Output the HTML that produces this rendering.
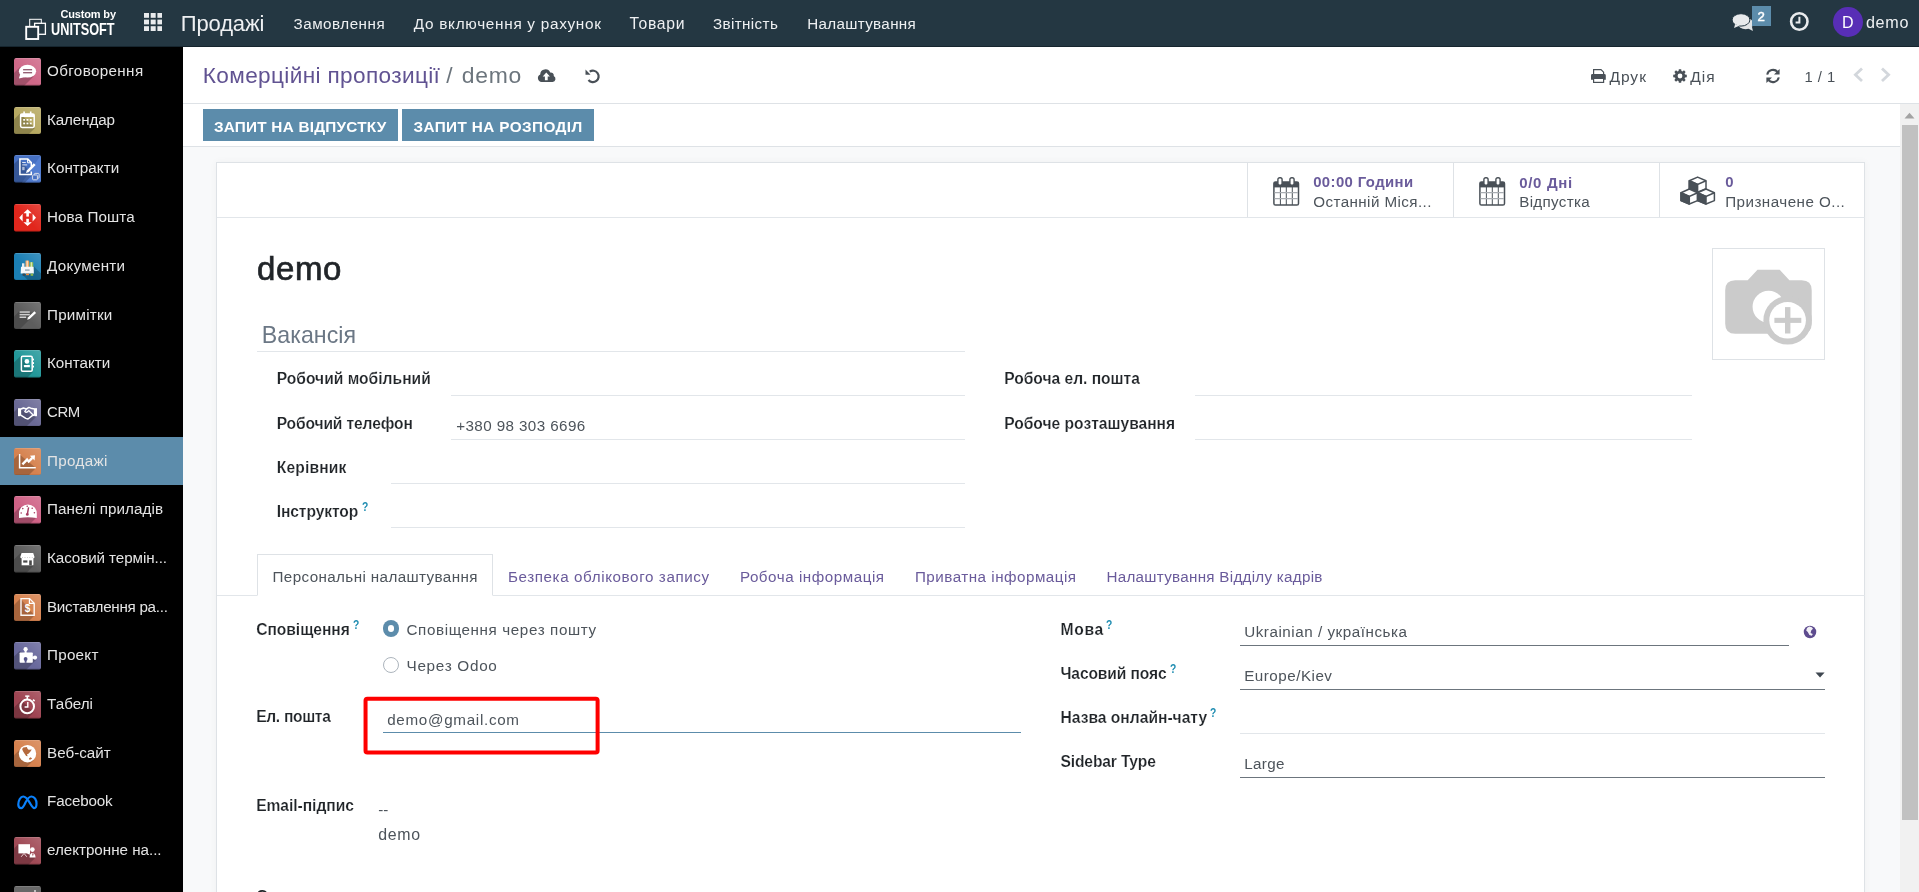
<!DOCTYPE html>
<html lang="uk">
<head>
<meta charset="utf-8">
<title>Odoo - demo</title>
<style>
*{box-sizing:border-box;margin:0;padding:0}
html,body{width:1919px;height:892px;overflow:hidden;background:#f8f9fa;font-family:"Liberation Sans",sans-serif;color:#212529}
.t{position:absolute;white-space:pre;line-height:1}
.a{position:absolute}
#nav{position:absolute;left:0;top:0;width:1919px;height:46.8px;background:#243742;border-bottom:1px solid #16252e}
#side{position:absolute;left:0;top:46.5px;width:183px;height:846px;background:#000}
.act{position:absolute;left:0;width:183px;height:48px;background:#5c8cab}
.ic{position:absolute;left:14px;width:27px;height:27px;border-radius:2px;overflow:hidden}
#cp{position:absolute;left:183px;top:46.8px;width:1736px;height:57.2px;background:#fff;border-bottom:1px solid #dee2e6}
#sb{position:absolute;left:183px;top:104px;width:1717px;height:43px;background:#fff;border-bottom:1px solid #dee2e6}
.btn{position:absolute;top:109px;height:32px;background:#5c8cab}
#sheet{position:absolute;left:216px;top:162px;width:1649px;height:760px;background:#fff;border:1px solid #dee2e6;box-shadow:0 0 8px rgba(0,0,0,.04)}
.hl{position:absolute;height:1px;background:#e2e6ea}
.vl{position:absolute;width:1px;background:#dee2e6}
#scroll{position:absolute;left:1899.5px;top:104px;width:19.5px;height:788px;background:#f1f1f1}
#thumb{position:absolute;left:1901.5px;top:125px;width:16px;height:695px;background:#c1c1c1}
</style>
</head>
<body>
<div id="nav"></div>
<div id="side"><div class="act" style="top:390.5px"></div></div>
<div id="cp"></div>
<div id="sb"></div>
<div class="btn" style="left:203px;width:195px"></div>
<div class="btn" style="left:402px;width:192px"></div>
<div id="sheet"></div>
<!-- stat button box -->
<div class="hl" style="left:217px;top:217px;width:1648px"></div>
<div class="vl" style="left:1247px;top:163px;height:54px"></div>
<div class="vl" style="left:1453px;top:163px;height:54px"></div>
<div class="vl" style="left:1659px;top:163px;height:54px"></div>
<!-- photo -->
<div class="a" style="left:1712px;top:248px;width:113px;height:112px;border:1px solid #dee2e6;background:#fff"></div>
<!-- field lines -->
<div class="hl" style="left:257px;top:351px;width:708px"></div>
<div class="hl" style="left:451px;top:395px;width:514px"></div>
<div class="hl" style="left:451px;top:439px;width:514px"></div>
<div class="hl" style="left:391px;top:483px;width:574px"></div>
<div class="hl" style="left:391px;top:527px;width:574px"></div>
<div class="hl" style="left:1195px;top:395px;width:497px"></div>
<div class="hl" style="left:1195px;top:439px;width:497px"></div>
<!-- tabs -->
<div class="hl" style="left:217px;top:595px;width:1648px"></div>
<div class="a" style="left:257px;top:554px;width:236px;height:42px;border:1px solid #dee2e6;border-bottom:1px solid #fff;background:#fff"></div>
<!-- radios -->
<div class="a" style="left:382.7px;top:620.4px;width:16.4px;height:16.4px;border-radius:50%;background:#5c8cab"></div>
<div class="a" style="left:387.7px;top:625.4px;width:6.4px;height:6.4px;border-radius:50%;background:#fff"></div>
<div class="a" style="left:382.7px;top:656.5px;width:16.4px;height:16.4px;border-radius:50%;background:#fff;border:1px solid #adb5bd"></div>
<!-- email line + red box -->
<div class="hl" style="left:383px;top:732px;width:638px;background:#5c8cab"></div>
<svg class="a" style="left:360px;top:692px" width="244" height="66" viewBox="0 0 244 66"><rect x="5.55" y="6.65" width="232.05" height="53.95" rx="1.8" fill="none" stroke="#fe0000" stroke-width="4"/></svg>
<!-- right field lines -->
<div class="hl" style="left:1240px;top:645px;width:549px;background:#6c757d"></div>
<div class="hl" style="left:1240px;top:689px;width:585px;background:#6c757d"></div>
<div class="hl" style="left:1240px;top:733px;width:585px"></div>
<div class="hl" style="left:1240px;top:777px;width:585px;background:#6c757d"></div>
<!-- scrollbar -->
<div id="scroll"></div><div id="thumb"></div>
<svg class="a" style="left:0;top:0" width="1" height="1"><defs><linearGradient id="lg" x1="1" y1="0" x2="0" y2="1"><stop offset="0" stop-color="#fff" stop-opacity=".16"/><stop offset=".55" stop-color="#fff" stop-opacity="0"/></linearGradient></defs></svg>
<svg class="a" style="left:14px;top:58.0px;border-radius:2px;overflow:hidden;" width="27" height="27.5" viewBox="0 0 27 27.5"><rect width="27" height="27.5" rx="1.5" fill="#cf6888"/><polygon points="6,9 19.5,18.5 -10.5,48.5 -24,39" fill="#000" opacity="0.22"/><rect width="27" height="27.5" fill="url(#lg)"/><rect y="0" width="27" height="1" fill="#fff" opacity=".15"/><rect y="26.5" width="27" height="1" fill="#000" opacity=".15"/><ellipse cx="13.5" cy="13.2" rx="8.6" ry="6.4" fill="#fff"/><polygon points="6.2,16 4.9,20.6 11.5,19" fill="#fff"/><rect x="9.1" y="11.2" width="9" height="1.1" fill="#7b3850"/><rect x="9.1" y="14.2" width="9" height="1.1" fill="#7b3850"/></svg>
<svg class="a" style="left:14px;top:106.7px;border-radius:2px;overflow:hidden;" width="27" height="27.5" viewBox="0 0 27 27.5"><rect width="27" height="27.5" rx="1.5" fill="#b7a962"/><polygon points="6,6.5 21,21 -9,51 -24,36.5" fill="#000" opacity="0.22"/><rect width="27" height="27.5" fill="url(#lg)"/><rect y="0" width="27" height="1" fill="#fff" opacity=".15"/><rect y="26.5" width="27" height="1" fill="#000" opacity=".15"/><rect x="6.6" y="7" width="13.6" height="13.4" rx="1.4" fill="none" stroke="#fff" stroke-width="1.5"/><rect x="6.6" y="7" width="13.6" height="3" fill="#fff"/><rect x="9.3" y="4.5" width="1.6" height="3.5" fill="#fff"/><rect x="15.9" y="4.5" width="1.6" height="3.5" fill="#fff"/><rect x="9.2" y="12" width="1.9" height="1.7" fill="#fff"/><rect x="12.5" y="12" width="1.9" height="1.7" fill="#fff"/><rect x="15.8" y="12" width="1.9" height="1.7" fill="#fff"/><rect x="9.2" y="15.6" width="1.9" height="1.7" fill="#fff"/><rect x="12.5" y="15.6" width="1.9" height="1.7" fill="#fff"/><rect x="15.8" y="15.6" width="1.9" height="1.7" fill="#fff"/></svg>
<svg class="a" style="left:14px;top:155.4px;border-radius:2px;overflow:hidden;" width="27" height="27.5" viewBox="0 0 27 27.5"><rect width="27" height="27.5" rx="1.5" fill="#4670c2"/><polygon points="27,0 27,27.5 8,27.5" fill="#5f8ade" opacity=".55"/><polygon points="5,4 18.5,20 -11.5,50 -25,34" fill="#000" opacity="0.22"/><rect y="0" width="27" height="1" fill="#fff" opacity=".15"/><rect y="26.5" width="27" height="1" fill="#000" opacity=".15"/><path d="M17.3,11.4 V7.6 L13.8,4.1 H5.9 V19.4 H17.3 V16.6" fill="none" stroke="#fff" stroke-width="1.5"/><path d="M13.6,4.2 v3.6 h3.6" fill="none" stroke="#fff" stroke-width="1"/><rect x="8.2" y="7" width="3.6" height="1" fill="#dfe6f5"/><rect x="8.2" y="9.4" width="5" height="1" fill="#dfe6f5"/><rect x="8.2" y="11.8" width="2.4" height="3.4" fill="#dfe6f5" opacity=".7"/><path d="M19.8,8.2 l1.8,1.8 l-7,7.2 l-2.6,0.9 l0.8,-2.7 z" fill="#fff"/><rect x="20.3" y="18.4" width="4.8" height="4.8" rx=".8" fill="none" stroke="#d5dbe8" stroke-width="1"/><rect x="18.6" y="20" width="4.8" height="4.8" rx=".8" fill="#4670c2" stroke="#d5dbe8" stroke-width="1"/></svg>
<svg class="a" style="left:14px;top:204.1px;border-radius:2px;overflow:hidden;" width="27" height="27.5" viewBox="0 0 27 27.5"><rect width="27" height="27.5" rx="1.5" fill="#e1261c"/><rect width="27" height="27.5" fill="url(#lg)"/><rect y="0" width="27" height="1" fill="#fff" opacity=".15"/><rect y="26.5" width="27" height="1" fill="#000" opacity=".15"/><polygon points="13.6,5.3 17.8,9.2 9.4,9.2" fill="#fff"/><rect x="12.3" y="9" width="2.6" height="3.6" fill="#fff"/><polygon points="13.6,22.1 17.8,18.2 9.4,18.2" fill="#fff"/><rect x="12.3" y="14.8" width="2.6" height="3.6" fill="#fff"/><polygon points="5.2,13.7 8.6,9.8 8.6,17.6" fill="#fff"/><polygon points="22,13.7 18.6,9.8 18.6,17.6" fill="#fff"/></svg>
<svg class="a" style="left:14px;top:252.8px;border-radius:2px;overflow:hidden;" width="27" height="27.5" viewBox="0 0 27 27.5"><rect width="27" height="27.5" rx="1.5" fill="#1b7fb4"/><rect width="27" height="27.5" fill="url(#lg)"/><rect y="0" width="27" height="1" fill="#fff" opacity=".15"/><rect y="26.5" width="27" height="1" fill="#000" opacity=".15"/><polygon points="19.5,13 27,20.5 27,27.5 14,27.5 8,21" fill="#000" opacity=".22"/><rect x="8" y="10.3" width="2.4" height="5" fill="#e9eef2"/><rect x="11.5" y="7.6" width="3.6" height="7" fill="#f0a35e"/><rect x="12.6" y="7.6" width="1.2" height="7" fill="#fbe3cf"/><rect x="15.6" y="9.2" width="3.6" height="6" fill="#9cc25a"/><rect x="16.9" y="9.2" width="1" height="6" fill="#dcebc0"/><path d="M7,13.8 h12.6 l0.3,6.6 h-13.2 z" fill="#f4f7fa"/><rect x="11" y="16.6" width="4.6" height=".9" fill="#5f7a8c"/><rect x="8.6" y="20.6" width="2.3" height="2.2" fill="#3a4650"/><rect x="12" y="20.6" width="3" height="1.6" fill="#f08a3c"/><rect x="16.6" y="20.6" width="2.6" height="2.2" fill="#8fb84a"/></svg>
<svg class="a" style="left:14px;top:301.5px;border-radius:2px;overflow:hidden;" width="27" height="27.5" viewBox="0 0 27 27.5"><rect width="27" height="27.5" rx="1.5" fill="#5d5d5d"/><polygon points="5.5,9 22,11 -8,41 -24.5,39" fill="#000" opacity="0.18"/><rect width="27" height="27.5" fill="url(#lg)"/><rect y="0" width="27" height="1" fill="#fff" opacity=".15"/><rect y="26.5" width="27" height="1" fill="#000" opacity=".15"/><rect x="5.6" y="9.3" width="10.2" height="1.5" fill="#cfcfcf"/><rect x="5.6" y="11.9" width="10.2" height="1.5" fill="#cfcfcf"/><rect x="5.6" y="14.5" width="6.6" height="1.5" fill="#cfcfcf"/><path d="M20.4,9.2 l1.7,1.7 l-6.4,6 l-2.6,0.8 l1,-2.5 z" fill="#fff"/></svg>
<svg class="a" style="left:14px;top:350.2px;border-radius:2px;overflow:hidden;" width="27" height="27.5" viewBox="0 0 27 27.5"><rect width="27" height="27.5" rx="1.5" fill="#23989a"/><polygon points="6.6,6 19,22 -11,52 -23.4,36" fill="#000" opacity="0.22"/><rect width="27" height="27.5" fill="url(#lg)"/><rect y="0" width="27" height="1" fill="#fff" opacity=".15"/><rect y="26.5" width="27" height="1" fill="#000" opacity=".15"/><rect x="7.4" y="6.2" width="10.8" height="15" rx="1.2" fill="none" stroke="#fff" stroke-width="1.5"/><rect x="18.6" y="8.4" width="1.4" height="2" rx=".6" fill="#fff"/><rect x="18.6" y="12" width="1.4" height="2" rx=".6" fill="#fff"/><rect x="18.6" y="15.6" width="1.4" height="2" rx=".6" fill="#fff"/><circle cx="12.9" cy="11.4" r="2.3" fill="#fff"/><rect x="9.9" y="15" width="6" height="2.2" rx=".6" fill="#fff"/></svg>
<svg class="a" style="left:14px;top:398.9px;border-radius:2px;overflow:hidden;" width="27" height="27.5" viewBox="0 0 27 27.5"><rect width="27" height="27.5" rx="1.5" fill="#6a6995"/><polygon points="4,9 22,18 -8,48 -26,39" fill="#000" opacity="0.22"/><rect width="27" height="27.5" fill="url(#lg)"/><rect y="0" width="27" height="1" fill="#fff" opacity=".15"/><rect y="26.5" width="27" height="1" fill="#000" opacity=".15"/><rect x="4" y="9.2" width="2.4" height="8" fill="#fff"/><rect x="20.6" y="9.2" width="2.4" height="8" fill="#fff"/><path d="M6.4,10.2 l3,-1.2 l3,1 l2.5,-1.6 l3,1.2 l2.7,0.4 v6 l-2,0.4 l-4.6,3.6 l-2.2,-0.6 l-5.4,-3.6 z" fill="none" stroke="#fff" stroke-width="1.5" stroke-linejoin="round"/><path d="M12.4,10 l-1.6,2.6 q1.4,1.4 3,0 l1,-1 l4.6,4.6" fill="none" stroke="#fff" stroke-width="1.3"/></svg>
<svg class="a" style="left:14px;top:447.6px;border-radius:2px;overflow:hidden;" width="27" height="27.5" viewBox="0 0 27 27.5"><rect width="27" height="27.5" rx="1.5" fill="#d6824f"/><polygon points="5,6 22,20 -8,50 -25,36" fill="#000" opacity="0.22"/><rect width="27" height="27.5" fill="url(#lg)"/><rect y="0" width="27" height="1" fill="#fff" opacity=".15"/><rect y="26.5" width="27" height="1" fill="#000" opacity=".15"/><path d="M5.6,6 v13.7 h16.2" fill="none" stroke="#fff" stroke-width="1.5"/><path d="M8.4,16.4 l4.7,-4.8 l1.6,2 l3.6,-3.7" fill="none" stroke="#fff" stroke-width="2.3"/><polygon points="21,7.2 20.6,12.4 15.9,7.8" fill="#fff"/></svg>
<svg class="a" style="left:14px;top:496.3px;border-radius:2px;overflow:hidden;" width="27" height="27.5" viewBox="0 0 27 27.5"><rect width="27" height="27.5" rx="1.5" fill="#cf6286"/><polygon points="6,11 22,22 -8,52 -24,41" fill="#000" opacity="0.22"/><rect width="27" height="27.5" fill="url(#lg)"/><rect y="0" width="27" height="1" fill="#fff" opacity=".15"/><rect y="26.5" width="27" height="1" fill="#000" opacity=".15"/><path d="M5,22 v-4.6 a8.9,8.9 0 0 1 17.8,0 v4.6 q-8.9,-1.6 -17.8,0 z" fill="#fff"/><path d="M14.6,11.4 l-1.2,6.6" stroke="#a63a60" stroke-width="1.4"/><circle cx="13.3" cy="18.4" r="1.4" fill="#a63a60"/><circle cx="7.2" cy="17" r=".8" fill="#a63a60"/><circle cx="8.8" cy="12.6" r=".8" fill="#a63a60"/><circle cx="13.2" cy="10.2" r=".8" fill="#a63a60"/><circle cx="18.2" cy="12.2" r=".8" fill="#a63a60"/><circle cx="20.4" cy="16.8" r=".8" fill="#a63a60"/></svg>
<svg class="a" style="left:14px;top:545.0px;border-radius:2px;overflow:hidden;" width="27" height="27.5" viewBox="0 0 27 27.5"><rect width="27" height="27.5" rx="1.5" fill="#5c5c5c"/><polygon points="6.6,8 20,20.3 -10,50.3 -23.4,38" fill="#000" opacity="0.18"/><rect width="27" height="27.5" fill="url(#lg)"/><rect y="0" width="27" height="1" fill="#fff" opacity=".15"/><rect y="26.5" width="27" height="1" fill="#000" opacity=".15"/><path d="M7.6,8.1 h11.6 l1.4,4.2 q-1.2,1.6 -2.4,0.2 q-1.2,1.4 -2.4,0 q-1.2,1.4 -2.4,0 q-1.2,1.4 -2.4,0 q-1.2,1.4 -2.4,0 q-1.2,1.4 -2.4,-0.2 z" fill="#fff"/><rect x="7.6" y="13" width="11.8" height="7.3" fill="#fff"/><rect x="9.2" y="15.4" width="4.2" height="2.2" fill="#4a4a4a"/><rect x="15.2" y="15.4" width="2.6" height="4.9" fill="#4a4a4a"/></svg>
<svg class="a" style="left:14px;top:593.7px;border-radius:2px;overflow:hidden;" width="27" height="27.5" viewBox="0 0 27 27.5"><rect width="27" height="27.5" rx="1.5" fill="#d6824f"/><polygon points="6.4,4.5 20.5,21.5 -9.5,51.5 -23.6,34.5" fill="#000" opacity="0.22"/><rect width="27" height="27.5" fill="url(#lg)"/><rect y="0" width="27" height="1" fill="#fff" opacity=".15"/><rect y="26.5" width="27" height="1" fill="#000" opacity=".15"/><path d="M7,4.6 h8.6 l4.6,4.6 v12 h-13.2 z" fill="none" stroke="#fff" stroke-width="1.4" opacity=".95"/><path d="M15.4,4.8 v4.6 h4.6" fill="none" stroke="#fff" stroke-width="1.2"/><text x="13.5" y="18.2" font-family="Liberation Sans,sans-serif" font-size="10" font-weight="bold" fill="#fff" text-anchor="middle">$</text></svg>
<svg class="a" style="left:14px;top:642.4px;border-radius:2px;overflow:hidden;" width="27" height="27.5" viewBox="0 0 27 27.5"><rect width="27" height="27.5" rx="1.5" fill="#69699c"/><polygon points="5.6,9 22,18 -8,48 -24.4,39" fill="#000" opacity="0.22"/><rect width="27" height="27.5" fill="url(#lg)"/><rect y="0" width="27" height="1" fill="#fff" opacity=".15"/><rect y="26.5" width="27" height="1" fill="#000" opacity=".15"/><rect x="5.6" y="10.4" width="13.2" height="10.3" rx=".8" fill="#fff"/><circle cx="11.6" cy="7.2" r="2.1" fill="#fff"/><rect x="10.6" y="8" width="2" height="3" fill="#fff"/><circle cx="21" cy="15.6" r="2.1" fill="#fff"/><rect x="18" y="14.6" width="2.4" height="2" fill="#fff"/><circle cx="11.6" cy="17" r="1.9" fill="#55558a"/><rect x="10.7" y="17.6" width="1.8" height="3.2" fill="#55558a"/></svg>
<svg class="a" style="left:14px;top:691.1px;border-radius:2px;overflow:hidden;" width="27" height="27.5" viewBox="0 0 27 27.5"><rect width="27" height="27.5" rx="1.5" fill="#9e4452"/><polygon points="7.5,9 19.5,21.5 -10.5,51.5 -22.5,39" fill="#000" opacity="0.22"/><rect width="27" height="27.5" fill="url(#lg)"/><rect y="0" width="27" height="1" fill="#fff" opacity=".15"/><rect y="26.5" width="27" height="1" fill="#000" opacity=".15"/><circle cx="13.2" cy="15.4" r="6.8" fill="none" stroke="#fff" stroke-width="2"/><rect x="11.2" y="4.4" width="4.2" height="1.5" fill="#fff"/><rect x="12.5" y="5.4" width="1.6" height="2.6" fill="#fff"/><path d="M19,8.6 l1.6,1.5" stroke="#fff" stroke-width="1.6"/><path d="M13.8,11 v5 h-3.2" fill="none" stroke="#fff" stroke-width="1.4"/></svg>
<svg class="a" style="left:14px;top:739.8px;border-radius:2px;overflow:hidden;" width="27" height="27.5" viewBox="0 0 27 27.5"><rect width="27" height="27.5" rx="1.5" fill="#d6824f"/><polygon points="7.2,8 20,19.8 -10,49.8 -22.8,38" fill="#000" opacity="0.22"/><rect width="27" height="27.5" fill="url(#lg)"/><rect y="0" width="27" height="1" fill="#fff" opacity=".15"/><rect y="26.5" width="27" height="1" fill="#000" opacity=".15"/><circle cx="13.5" cy="13.7" r="8.7" fill="#fff"/><polygon points="8.1,9.1 9.3,7.5 12.9,7.1 13.4,8.4 14.6,9.8 17.8,9.5 16.1,11.9 14.1,13.9 12.9,14.3 13.7,16.3 12.1,15.9 10.1,13.1 8.9,11.1" fill="#b46a3e"/><polygon points="14.9,18.4 16.5,17.2 18.2,18.4 15.7,20" fill="#b46a3e"/></svg>
<svg class="a" style="left:14px;top:837.2px;border-radius:2px;overflow:hidden;" width="27" height="27.5" viewBox="0 0 27 27.5"><rect width="27" height="27.5" rx="1.5" fill="#a04a56"/><polygon points="4.4,7 21.6,20.6 -8.399999999999999,50.6 -25.6,37" fill="#000" opacity="0.22"/><rect width="27" height="27.5" fill="url(#lg)"/><rect y="0" width="27" height="1" fill="#fff" opacity=".15"/><rect y="26.5" width="27" height="1" fill="#000" opacity=".15"/><rect x="4.4" y="7.2" width="11.6" height="9.2" fill="#fff"/><path d="M10,16.4 l-2.8,3.4 M10,16.4 l2.8,3.4" stroke="#e8d0d3" stroke-width="1"/><circle cx="18.4" cy="12.6" r="2.3" fill="#fff"/><path d="M15.6,20.6 q0,-4.6 2.8,-4.6 q2.8,0 3.2,4.6 z" fill="#fff"/><path d="M18,16.4 l0.9,3 l0.8,-3" fill="#a04a56"/><path d="M15.8,17.2 l-2.4,-1.6" stroke="#fff" stroke-width="1.3"/></svg>
<svg class="a" style="left:14px;top:886.4px;border-radius:2px;" width="27" height="27.5" viewBox="0 0 27 27.5"><rect width="27" height="27.5" rx="1.5" fill="#686868"/><rect width="27" height="1" fill="#fff" opacity=".15"/><circle cx="21" cy="5" r="1" fill="#ddd"/></svg>
<svg class="a" style="left:16px;top:794px;" width="24" height="17" viewBox="0 0 24 17"><path d="M 5.3,14.1 C 3.0,14.1 2.3,12.5 2.3,10.5 C 2.3,6.5 4.5,2.5 7.3,2.5 C 10.5,2.5 13.0,7.5 14.5,10.0 C 15.8,12.2 16.8,14.1 18.2,14.1 C 20.0,14.1 20.5,12.0 20.5,9.5 C 20.5,6.0 18.5,2.5 15.5,2.5 C 13.0,2.5 11.0,5.5 9.5,8.5 C 8.0,11.5 7.0,14.1 5.3,14.1 Z" fill="none" stroke="#0a80fa" stroke-width="2.2" stroke-linejoin="round"/></svg>
<svg class="a" style="left:24px;top:17px;" width="24" height="24" viewBox="0 0 24 24"><rect x="5.7" y="2.3" width="11.6" height="9" fill="none" stroke="#fff" stroke-width="1"/><rect x="10.6" y="6.3" width="10.8" height="11" fill="#243742" stroke="#fff" stroke-width="1.3"/><rect x="2.2" y="9.8" width="12" height="12.2" fill="#243742" stroke="#fff" stroke-width="1.9"/></svg>
<svg class="a" style="left:144px;top:13px;" width="18.4" height="18" viewBox="0 0 18.4 18"><rect x="0" y="0" width="5" height="4.8" fill="#e9ebed"/><rect x="6.7" y="0" width="5" height="4.8" fill="#e9ebed"/><rect x="13.4" y="0" width="5" height="4.8" fill="#e9ebed"/><rect x="0" y="6.6" width="5" height="4.8" fill="#e9ebed"/><rect x="6.7" y="6.6" width="5" height="4.8" fill="#e9ebed"/><rect x="13.4" y="6.6" width="5" height="4.8" fill="#e9ebed"/><rect x="0" y="13.2" width="5" height="4.8" fill="#e9ebed"/><rect x="6.7" y="13.2" width="5" height="4.8" fill="#e9ebed"/><rect x="13.4" y="13.2" width="5" height="4.8" fill="#e9ebed"/></svg>
<svg class="a" style="left:1731px;top:13px;" width="24" height="19" viewBox="0 0 24 19"><ellipse cx="14.6" cy="10.5" rx="7.7" ry="5.7" fill="#e2e4e6"/><polygon points="17.2,15.4 21.9,18 20.8,13.2" fill="#e2e4e6"/><ellipse cx="10" cy="6.9" rx="8.9" ry="6.2" fill="#e8eaec" stroke="#243742" stroke-width="1"/><polygon points="4.2,11 3,14.9 9,12.6" fill="#e8eaec"/></svg>
<div class="a" style="left:1752px;top:6px;width:19px;height:20px;background:#5c8cab"></div>
<svg class="a" style="left:1789px;top:11px;" width="21" height="21" viewBox="0 0 21 21"><circle cx="10.3" cy="10.5" r="8.2" fill="none" stroke="#e9ebed" stroke-width="2.6"/><path d="M10.4,5.8 v5.6 h-3.8" fill="none" stroke="#e9ebed" stroke-width="2"/></svg>
<div class="a" style="left:1833px;top:6.8px;width:30px;height:30.3px;border-radius:50%;background:#582eb6"></div>
<svg class="a" style="left:537px;top:68px;" width="20" height="15" viewBox="0 0 20 15"><path d="M4.6,14 a4,4 0 0 1 -1.4,-7.6 a5.2,5.2 0 0 1 10,-1.8 a3,3 0 0 1 3.6,3.4 a3.2,3.2 0 0 1 -1.2,6 z" fill="#495057"/><path d="M9.3,4.6 l3.6,3.8 h-2.2 v3.8 h-2.8 v-3.8 h-2.2 z" fill="#fff"/></svg>
<svg class="a" style="left:584px;top:68px;" width="17" height="16" viewBox="0 0 17 16"><path d="M5.7,3.7 A5.7,5.7 0 1 1 4.5,12" fill="none" stroke="#495057" stroke-width="2.2"/><polygon points="1.5,1.6 1.5,6.7 6.6,6.7" fill="#495057"/></svg>
<svg class="a" style="left:1590px;top:68px;" width="18" height="16" viewBox="0 0 18 16"><path d="M3.6,6 v-4.4 h7.4 l2.6,2.6 v1.8" fill="none" stroke="#495057" stroke-width="1.2"/><path d="M1,7.4 q0,-1.4 1.4,-1.4 h12 q1.4,0 1.4,1.4 v4.4 h-2.6 v-1.6 h-9.6 v1.6 h-2.6 z" fill="#495057"/><rect x="3.6" y="10.4" width="10" height="4" fill="none" stroke="#495057" stroke-width="1.2"/></svg>
<svg class="a" style="left:1673px;top:69.3px;" width="14" height="14" viewBox="0 0 14 14"><polygon points="13.80,5.83 13.80,8.17 12.00,8.44 11.55,9.52 12.63,10.98 10.98,12.63 9.52,11.55 8.44,12.00 8.17,13.80 5.83,13.80 5.56,12.00 4.48,11.55 3.02,12.63 1.37,10.98 2.45,9.52 2.00,8.44 0.20,8.17 0.20,5.83 2.00,5.56 2.45,4.48 1.37,3.02 3.02,1.37 4.48,2.45 5.56,2.00 5.83,0.20 8.17,0.20 8.44,2.00 9.52,2.45 10.98,1.37 12.63,3.02 11.55,4.48 12.00,5.56" fill="#495057"/><circle cx="7" cy="7" r="2.4" fill="#fff"/></svg>
<svg class="a" style="left:1765px;top:67.5px;" width="16" height="16" viewBox="0 0 16 16"><path d="M2.2,6.6 A6,6 0 0 1 12.6,4" fill="none" stroke="#495057" stroke-width="2"/><polygon points="14.6,1 14.6,6.6 9,6.6" fill="#495057"/><path d="M13.8,9.4 A6,6 0 0 1 3.4,12" fill="none" stroke="#495057" stroke-width="2"/><polygon points="1.4,15 1.4,9.4 7,9.4" fill="#495057"/></svg>
<svg class="a" style="left:1852px;top:66px;" width="12" height="18" viewBox="0 0 12 18"><path d="M10,2.4 L3.4,8.7 L10,15" fill="none" stroke="#d3d7dc" stroke-width="2.8"/></svg>
<svg class="a" style="left:1880px;top:66px;" width="12" height="18" viewBox="0 0 12 18"><path d="M2,2.4 L8.6,8.7 L2,15" fill="none" stroke="#d3d7dc" stroke-width="2.8"/></svg>
<svg class="a" style="left:1273px;top:176.5px;" width="27" height="29" viewBox="0 0 27 29"><rect x=".9" y="5" width="24.6" height="23" rx="1.6" fill="#fff" stroke="#495057" stroke-width="1.5"/><rect x=".9" y="5" width="24.6" height="5.4" fill="#495057"/><path d="M7.4,10 v18 M13.3,10 v18 M19.3,10 v18" stroke="#495057" stroke-width="1"/><path d="M1.5,15.6 h23.4 M1.5,21.6 h23.4" stroke="#a9adb2" stroke-width="1.1"/><rect x="4.9" y=".7" width="4.2" height="7.6" rx="1.8" fill="#fff" stroke="#495057" stroke-width="1.4"/><rect x="16.9" y=".7" width="4.2" height="7.6" rx="1.8" fill="#fff" stroke="#495057" stroke-width="1.4"/></svg>
<svg class="a" style="left:1479px;top:176.5px;" width="27" height="29" viewBox="0 0 27 29"><rect x=".9" y="5" width="24.6" height="23" rx="1.6" fill="#fff" stroke="#495057" stroke-width="1.5"/><rect x=".9" y="5" width="24.6" height="5.4" fill="#495057"/><path d="M7.4,10 v18 M13.3,10 v18 M19.3,10 v18" stroke="#495057" stroke-width="1"/><path d="M1.5,15.6 h23.4 M1.5,21.6 h23.4" stroke="#a9adb2" stroke-width="1.1"/><rect x="4.9" y=".7" width="4.2" height="7.6" rx="1.8" fill="#fff" stroke="#495057" stroke-width="1.4"/><rect x="16.9" y=".7" width="4.2" height="7.6" rx="1.8" fill="#fff" stroke="#495057" stroke-width="1.4"/></svg>
<svg class="a" style="left:1679px;top:175px;" width="38" height="32" viewBox="0 0 38 32"><polygon points="18.6,2.1 27.0,5.8 27.0,13.7 18.6,17.1 10.3,13.7 10.3,5.8" fill="#fff" stroke="#495057" stroke-width="1.5" stroke-linejoin="round"/><polygon points="10.3,5.8 18.6,9.5 18.6,17.1 10.3,13.7" fill="#495057" stroke="#495057" stroke-width="1.5" stroke-linejoin="round"/><path d="M10.3,5.8 L18.6,9.5 L27.0,5.8" fill="none" stroke="#495057" stroke-width="1.5"/><polygon points="10.3,14.0 18.6,17.7 18.6,25.6 10.3,29.0 2.0,25.6 2.0,17.7" fill="#fff" stroke="#495057" stroke-width="1.5" stroke-linejoin="round"/><polygon points="2.0,17.7 10.3,21.4 10.3,29.0 2.0,25.6" fill="#495057" stroke="#495057" stroke-width="1.5" stroke-linejoin="round"/><path d="M2.0,17.7 L10.3,21.4 L18.6,17.7" fill="none" stroke="#495057" stroke-width="1.5"/><polygon points="27.0,14.0 35.4,17.7 35.4,25.6 27.0,29.0 18.6,25.6 18.6,17.7" fill="#fff" stroke="#495057" stroke-width="1.5" stroke-linejoin="round"/><polygon points="18.6,17.7 27.0,21.4 27.0,29.0 18.6,25.6" fill="#495057" stroke="#495057" stroke-width="1.5" stroke-linejoin="round"/><path d="M18.6,17.7 L27.0,21.4 L35.4,17.7" fill="none" stroke="#495057" stroke-width="1.5"/></svg>
<svg class="a" style="left:1720px;top:264px;" width="98" height="84" viewBox="0 0 98 84"><path d="M5.2,26.2 q0,-10 10,-10 h12.5 l9.8,-10.4 h22.2 l9.7,10.4 h12.3 q10,0 10,10 v33.6 q0,10 -10,10 h-66.5 q-10,0 -10,-10 z" fill="#cbcbcb"/><circle cx="48.6" cy="42.7" r="16" fill="#fff"/><circle cx="67.6" cy="56.3" r="24.2" fill="#cbcbcb"/><circle cx="67.6" cy="56.3" r="18.3" fill="#fff"/><rect x="54.4" y="53.8" width="26.9" height="5.1" fill="#cbcbcb"/><rect x="65" y="43.1" width="5.4" height="26.4" fill="#cbcbcb"/></svg>
<svg class="a" style="left:1803px;top:625px;" width="14" height="14" viewBox="0 0 14 14"><circle cx="7" cy="7" r="6.25" fill="#5e4c8f"/><path d="M4,3 l2.2,-1.4 l2.6,0.6 l1.2,1.6 l-1.8,1.8 l-0.6,2.4 l2.2,1 l-1,1.8 l-2.4,-0.8 l-1.6,-3 l-1.6,-1.4 z" fill="#fff" opacity=".92"/></svg>
<svg class="a" style="left:1815.2px;top:671.5px;" width="10" height="6" viewBox="0 0 10 6"><polygon points="0.5,0.5 9.6,0.5 5.05,5.5" fill="#3f4750"/></svg>
<svg class="a" style="left:1904px;top:112px;" width="11" height="7" viewBox="0 0 11 7"><polygon points="0.5,6.5 10.5,6.5 5.5,0.8" fill="#a3a3a3"/></svg>
<div style="position:absolute;left:0;top:0;width:1919px;height:892px;will-change:transform;overflow:hidden">
<span class="t" style="left:180.8px;top:13px;font-size:22px;color:#eef0f2;letter-spacing:-0.14px;">Продажі</span>
<span class="t" style="left:293.5px;top:16px;font-size:15.2px;color:#eef0f2;letter-spacing:0.51px;">Замовлення</span>
<span class="t" style="left:413.8px;top:16px;font-size:15.34px;color:#eef0f2;letter-spacing:0.70px;">До включення у рахунок</span>
<span class="t" style="left:629.4px;top:16px;font-size:15.73px;color:#eef0f2;letter-spacing:0.70px;">Товари</span>
<span class="t" style="left:712.9px;top:16px;font-size:15.2px;color:#eef0f2;letter-spacing:0.39px;">Звітність</span>
<span class="t" style="left:807.2px;top:16px;font-size:15.2px;color:#eef0f2;letter-spacing:0.33px;">Налаштування</span>
<span class="t" style="left:1865.9px;top:14px;font-size:16.15px;color:#eef0f2;letter-spacing:0.70px;">demo</span>
<span class="t" style="left:1841.9px;top:15px;font-size:16px;color:#fff;">D</span>
<span class="t" style="left:1757.5px;top:10px;font-size:13.2px;color:#fff;-webkit-text-stroke:0.5px #fff;">2</span>
<span class="t" style="left:60.4px;top:9px;font-size:11px;color:#fff;font-weight:bold;letter-spacing:-0.15px;">Custom by</span>
<span class="t" style="left:51.1px;top:22px;font-size:15.7px;color:#fff;font-weight:bold;transform:scaleX(0.811);transform-origin:0 50%;">UNITSOFT</span>
<span class="t" style="left:47.0px;top:63px;font-size:15.2px;color:#e4e4e4;letter-spacing:0.37px;">Обговорення</span>
<span class="t" style="left:47.0px;top:112px;font-size:15.2px;color:#e4e4e4;letter-spacing:-0.11px;">Календар</span>
<span class="t" style="left:47.0px;top:160px;font-size:15.2px;color:#e4e4e4;letter-spacing:0.05px;">Контракти</span>
<span class="t" style="left:47.0px;top:209px;font-size:15.2px;color:#e4e4e4;letter-spacing:0.10px;">Нова Пошта</span>
<span class="t" style="left:47.0px;top:258px;font-size:15.2px;color:#e4e4e4;letter-spacing:0.27px;">Документи</span>
<span class="t" style="left:47.0px;top:307px;font-size:15.2px;color:#e4e4e4;letter-spacing:0.21px;">Примітки</span>
<span class="t" style="left:47.0px;top:355px;font-size:15.2px;color:#e4e4e4;">Контакти</span>
<span class="t" style="left:47.0px;top:405px;font-size:14.93px;color:#e4e4e4;letter-spacing:-0.40px;">CRM</span>
<span class="t" style="left:47.0px;top:453px;font-size:15.2px;color:#e4e4e4;letter-spacing:0.36px;">Продажі</span>
<span class="t" style="left:47.0px;top:501px;font-size:15.2px;color:#e4e4e4;letter-spacing:0.08px;">Панелі приладів</span>
<span class="t" style="left:47.0px;top:550px;font-size:15.2px;color:#e4e4e4;letter-spacing:-0.08px;">Касовий термін...</span>
<span class="t" style="left:47.0px;top:599px;font-size:15.2px;color:#e4e4e4;letter-spacing:-0.27px;">Виставлення ра...</span>
<span class="t" style="left:47.0px;top:647px;font-size:15.2px;color:#e4e4e4;letter-spacing:0.27px;">Проект</span>
<span class="t" style="left:47.0px;top:696px;font-size:15.2px;color:#e4e4e4;letter-spacing:0.05px;">Табелі</span>
<span class="t" style="left:47.0px;top:745px;font-size:15.2px;color:#e4e4e4;letter-spacing:0.02px;">Веб-сайт</span>
<span class="t" style="left:47.0px;top:793px;font-size:15.2px;color:#e4e4e4;letter-spacing:-0.14px;">Facebook</span>
<span class="t" style="left:47.0px;top:842px;font-size:15.2px;color:#e4e4e4;letter-spacing:-0.02px;">електронне на...</span>
<span class="t" style="left:202.8px;top:65px;font-size:22.6px;color:#615392;letter-spacing:0.36px;">Комерційні пропозиції</span>
<span class="t" style="left:446.3px;top:65px;font-size:22.6px;color:#6c757d;">/</span>
<span class="t" style="left:461.8px;top:64px;font-size:22.91px;color:#6c757d;letter-spacing:0.70px;">demo</span>
<span class="t" style="left:1609.4px;top:69px;font-size:15.54px;color:#495057;letter-spacing:1.00px;">Друк</span>
<span class="t" style="left:1690.3px;top:69px;font-size:15.54px;color:#495057;letter-spacing:1.00px;">Дія</span>
<span class="t" style="left:1804.5px;top:70px;font-size:14.8px;color:#495057;letter-spacing:0.49px;">1 / 1</span>
<span class="t" style="left:213.9px;top:119px;font-size:15.3px;color:#fff;font-weight:bold;letter-spacing:0.24px;">ЗАПИТ НА ВІДПУСТКУ</span>
<span class="t" style="left:413.5px;top:119px;font-size:15.3px;color:#fff;font-weight:bold;letter-spacing:0.39px;">ЗАПИТ НА РОЗПОДІЛ</span>
<span class="t" style="left:1313.2px;top:175px;font-size:14.9px;color:#6a5b9b;font-weight:bold;letter-spacing:0.39px;">00:00 Години</span>
<span class="t" style="left:1313.2px;top:194px;font-size:15.2px;color:#4d545b;letter-spacing:0.42px;">Останній Міся...</span>
<span class="t" style="left:1519.2px;top:175px;font-size:14.99px;color:#6a5b9b;font-weight:bold;letter-spacing:0.70px;">0/0 Дні</span>
<span class="t" style="left:1519.2px;top:194px;font-size:15.2px;color:#4d545b;letter-spacing:0.32px;">Відпустка</span>
<span class="t" style="left:1725.2px;top:175px;font-size:14.9px;color:#6a5b9b;font-weight:bold;">0</span>
<span class="t" style="left:1725.2px;top:194px;font-size:15.2px;color:#4d545b;letter-spacing:0.46px;">Призначене О...</span>
<span class="t" style="left:257.1px;top:252px;font-size:33px;color:#212529;-webkit-text-stroke:0.7px #212529;letter-spacing:0.60px;">demo</span>
<span class="t" style="left:261.8px;top:324px;font-size:23.2px;color:#6b7785;letter-spacing:0.03px;">Вакансія</span>
<span class="t" style="left:276.7px;top:371px;font-size:15.6px;color:#212529;font-weight:bold;-webkit-text-stroke:0.18px #fff;letter-spacing:0.02px;">Робочий мобільний</span>
<span class="t" style="left:276.7px;top:416px;font-size:15.6px;color:#212529;font-weight:bold;-webkit-text-stroke:0.18px #fff;letter-spacing:-0.13px;">Робочий телефон</span>
<span class="t" style="left:456.2px;top:418px;font-size:15.2px;color:#4d545b;letter-spacing:0.41px;">+380 98 303 6696</span>
<span class="t" style="left:276.7px;top:460px;font-size:15.6px;color:#212529;font-weight:bold;-webkit-text-stroke:0.18px #fff;letter-spacing:0.17px;">Керівник</span>
<span class="t" style="left:276.7px;top:504px;font-size:15.6px;color:#212529;font-weight:bold;-webkit-text-stroke:0.18px #fff;letter-spacing:-0.08px;">Інструктор</span>
<span class="t" style="left:1004.2px;top:371px;font-size:15.6px;color:#212529;font-weight:bold;-webkit-text-stroke:0.18px #fff;letter-spacing:-0.01px;">Робоча ел. пошта</span>
<span class="t" style="left:1004.2px;top:416px;font-size:15.6px;color:#212529;font-weight:bold;-webkit-text-stroke:0.18px #fff;">Робоче розташування</span>
<span class="t" style="left:361.9px;top:501px;font-size:12.5px;color:#1f8db1;font-weight:bold;transform:scaleX(0.822);transform-origin:0 50%;">?</span>
<span class="t" style="left:272.5px;top:569px;font-size:15.2px;color:#4d545b;letter-spacing:0.39px;">Персональні налаштування</span>
<span class="t" style="left:507.9px;top:569px;font-size:15.2px;color:#6a5b9b;letter-spacing:0.60px;">Безпека облікового запису</span>
<span class="t" style="left:739.9px;top:569px;font-size:15.2px;color:#6a5b9b;letter-spacing:0.53px;">Робоча інформація</span>
<span class="t" style="left:914.9px;top:569px;font-size:15.2px;color:#6a5b9b;letter-spacing:0.50px;">Приватна інформація</span>
<span class="t" style="left:1106.5px;top:569px;font-size:15.2px;color:#6a5b9b;letter-spacing:0.28px;">Налаштування Відділу кадрів</span>
<span class="t" style="left:256.2px;top:622px;font-size:15.6px;color:#212529;font-weight:bold;-webkit-text-stroke:0.18px #fff;letter-spacing:-0.03px;">Сповіщення</span>
<span class="t" style="left:353.4px;top:619px;font-size:12.5px;color:#1f8db1;font-weight:bold;transform:scaleX(0.822);transform-origin:0 50%;">?</span>
<span class="t" style="left:406.5px;top:622px;font-size:15.2px;color:#4d545b;letter-spacing:0.61px;">Сповіщення через пошту</span>
<span class="t" style="left:406.5px;top:658px;font-size:15.3px;color:#4d545b;letter-spacing:0.70px;">Через Odoo</span>
<span class="t" style="left:256.2px;top:709px;font-size:15.6px;color:#212529;font-weight:bold;-webkit-text-stroke:0.18px #fff;letter-spacing:-0.32px;">Ел. пошта</span>
<span class="t" style="left:387.2px;top:712px;font-size:15.21px;color:#4d545b;letter-spacing:0.70px;">demo@gmail.com</span>
<span class="t" style="left:256.2px;top:798px;font-size:15.6px;color:#212529;font-weight:bold;-webkit-text-stroke:0.18px #fff;letter-spacing:-0.04px;">Email-підпис</span>
<span class="t" style="left:378.2px;top:802px;font-size:15.2px;color:#4d545b;">--</span>
<span class="t" style="left:378.2px;top:827px;font-size:15.91px;color:#4d545b;letter-spacing:0.70px;">demo</span>
<span class="t" style="left:256.5px;top:887px;font-size:15.2px;color:#212529;font-weight:bold;">С</span>
<span class="t" style="left:1060.5px;top:622px;font-size:15.67px;color:#212529;font-weight:bold;-webkit-text-stroke:0.18px #fff;letter-spacing:0.70px;">Мова</span>
<span class="t" style="left:1106.2px;top:619px;font-size:12.5px;color:#1f8db1;font-weight:bold;transform:scaleX(0.822);transform-origin:0 50%;">?</span>
<span class="t" style="left:1244.2px;top:624px;font-size:15.2px;color:#4d545b;letter-spacing:0.54px;">Ukrainian / українська</span>
<span class="t" style="left:1060.5px;top:666px;font-size:15.6px;color:#212529;font-weight:bold;-webkit-text-stroke:0.18px #fff;letter-spacing:-0.12px;">Часовий пояс</span>
<span class="t" style="left:1169.9px;top:663px;font-size:12.5px;color:#1f8db1;font-weight:bold;transform:scaleX(0.822);transform-origin:0 50%;">?</span>
<span class="t" style="left:1244.2px;top:668px;font-size:15.2px;color:#4d545b;letter-spacing:0.50px;">Europe/Kiev</span>
<span class="t" style="left:1060.5px;top:710px;font-size:15.6px;color:#212529;font-weight:bold;-webkit-text-stroke:0.18px #fff;letter-spacing:0.01px;">Назва онлайн-чату</span>
<span class="t" style="left:1210.2px;top:707px;font-size:12.5px;color:#1f8db1;font-weight:bold;transform:scaleX(0.822);transform-origin:0 50%;">?</span>
<span class="t" style="left:1060.5px;top:754px;font-size:15.6px;color:#212529;font-weight:bold;-webkit-text-stroke:0.18px #fff;letter-spacing:-0.13px;">Sidebar Type</span>
<span class="t" style="left:1244.2px;top:756px;font-size:15.2px;color:#4d545b;letter-spacing:0.36px;">Large</span>
</div>
</body>
</html>
